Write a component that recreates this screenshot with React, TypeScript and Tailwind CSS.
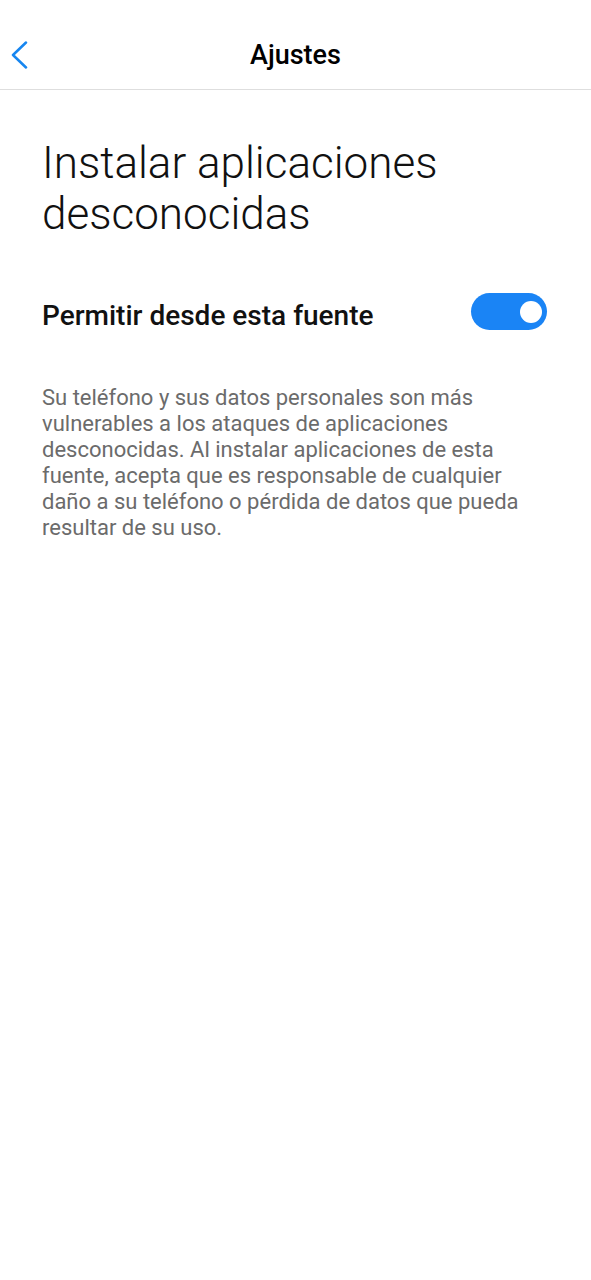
import React from "react";

export default function App() {
  return (
    <div className="w-[591px] min-h-[1280px] bg-white" style={{ fontFamily: "Roboto, 'Noto Sans', sans-serif" }}>
      <header className="relative h-[90px] flex items-center justify-center pt-[22px] border-b border-[#dedede]">
        <button className="absolute left-[9px] top-[41px] w-[20px] h-[28px] flex items-center justify-center">
          <svg width="20" height="28" viewBox="0 0 20 28" fill="none">
            <path d="M17 1.5 L4 14 L17 26.5" stroke="#1786f0" strokeWidth="2.5" strokeLinecap="round" strokeLinejoin="round" />
          </svg>
        </button>
        <h1 className="text-[27px] font-medium text-black">Ajustes</h1>
      </header>
      <main className="px-[42px]">
        <h2 className="mt-[48px] text-[44px] leading-[51px] font-light text-[#111]">
          Instalar aplicaciones desconocidas
        </h2>
        <div className="mt-[52px] flex items-start justify-between">
          <span className="pt-[4px] text-[28px] leading-[40px] font-medium text-[#111]">Permitir desde esta fuente</span>
          <div className="mt-[1px] w-[76px] h-[37px] rounded-full bg-[#1a84f5] flex items-center justify-end pr-[5px] mr-[2px]">
            <div className="w-[22px] h-[22px] rounded-full bg-white" />
          </div>
        </div>
        <p className="mt-[49px] text-[22px] leading-[26px] text-[#6b6b6b] pr-[10px]">
          Su teléfono y sus datos personales son más vulnerables a los ataques de aplicaciones desconocidas. Al instalar aplicaciones de esta fuente, acepta que es responsable de cualquier daño a su teléfono o pérdida de datos que pueda resultar de su uso.
        </p>
      </main>
    </div>
  );
}
